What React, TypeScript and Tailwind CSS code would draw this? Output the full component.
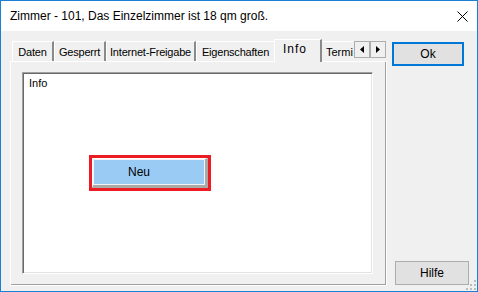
import React from "react";

const tabs = [
  { label: "Daten", w: "w-[42px]" },
  { label: "Gesperrt", w: "w-[52px]" },
  { label: "Internet-Freigabe", w: "w-[90px]" },
  { label: "Eigenschaften", w: "w-[80px]" },
];

function Tab({ label, w }: { label: string; w: string }) {
  return (
    <div
      className={`${w} h-[20px] shrink-0 border-t border-l border-white border-r-2 border-r-[#8a8a8a] pt-[2px] leading-[16px] text-center whitespace-nowrap tracking-[-0.2px]`}
    >
      {label}
    </div>
  );
}

function Arrow({ dir }: { dir: "left" | "right" }) {
  return (
    <div className="w-[16px] h-[17px] border border-[#adadad] bg-[#f0f0f0] flex items-center justify-center">
      <svg width="4" height="7" viewBox="0 0 4 7">
        {dir === "left" ? (
          <path d="M4 0 L0 3.5 L4 7 Z" fill="#000" />
        ) : (
          <path d="M0 0 L4 3.5 L0 7 Z" fill="#000" />
        )}
      </svg>
    </div>
  );
}

export default function App() {
  return (
    <div className="w-[478px] h-[292px] border border-[#1c7fd6] flex flex-col bg-[#f0f0f0] text-black text-[11px] font-['Liberation_Sans',Arial,sans-serif]">
      {/* title bar */}
      <div className="h-[30px] shrink-0 bg-white flex items-center justify-between pl-[9px] pr-[9px]">
        <span className="text-[12px]">
          Zimmer - 101, Das Einzelzimmer ist 18 qm groß.
        </span>
        <svg width="11" height="11" viewBox="0 0 11 11">
          <path d="M0.5 0.5 L10.5 10.5 M10.5 0.5 L0.5 10.5" stroke="#000" strokeWidth="1" />
        </svg>
      </div>

      <div className="relative flex-1 flex">
        {/* tab control */}
        <div className="ml-[9px] w-[377px] pt-[8px] pb-[5px] flex flex-col">
          <div className="h-[22px] shrink-0 flex items-end pl-[2px]">
            {tabs.map((t) => (
              <Tab key={t.label} label={t.label} w={t.w} />
            ))}
            <div className="relative z-10 -ml-[2px] -mr-[2px] -mb-px w-[48px] h-[23px] shrink-0 bg-[#f0f0f0] border-t border-l border-white border-r-2 border-r-[#8a8a8a] pt-[1px] pl-[8px] leading-[16px] text-[12px] tracking-[1px]">
              Info
            </div>
            <div className="w-[34px] h-[20px] shrink-0 border-t border-l border-white pt-[2px] pl-[5px] leading-[16px] whitespace-nowrap">
              Termi
            </div>
            <div className="self-start mt-[2px] flex">
              <Arrow dir="left" />
              <Arrow dir="right" />
            </div>
          </div>

          <div className="flex-1 border-t border-l border-white border-r border-b border-[#696969] border-t-white border-l-white shadow-[inset_-1px_-1px_0_#a0a0a0] pl-[11px] pt-[10px]">
            <div className="w-[351px] h-[202px] bg-white border border-t-[#a0a0a0] border-l-[#a0a0a0] border-r-white border-b-white shadow-[inset_1px_1px_0_#696969,inset_-1px_-1px_0_#e3e3e3] flex flex-col">
              <div className="pl-[6px] pt-[2px] leading-[16px]">Info</div>
              <div className="ml-[66px] mt-[64px] w-[122px] h-[36px] border-[3px] border-[#ed1c24] bg-[#f4f4f4]">
                <div className="w-full h-full border-t border-l border-white border-r-[3px] border-b-[3px] border-r-[#a9a9a9] border-b-[#a9a9a9] p-px">
                  <div className="w-full h-full bg-[#99cbf5] flex items-center pl-[34px] text-[12px]">
                    Neu
                  </div>
                </div>
              </div>
            </div>
          </div>
        </div>

        {/* buttons */}
        <div className="flex-1 flex flex-col">
          <button className="ml-[5px] mt-[11px] w-[72px] h-[24px] border-2 border-[#0078d7] bg-[#e1e1e1] text-[12px] leading-none">
            Ok
          </button>
          <button className="ml-[8px] mt-auto mb-[6px] w-[74px] h-[24px] border border-[#adadad] bg-[#e1e1e1] text-[12px] leading-none">
            Hilfe
          </button>
        </div>

        {/* size grip */}
        <svg className="absolute right-[1px] bottom-[1px]" width="10" height="10" viewBox="0 0 10 10">
          <rect x="8" y="0" width="2" height="2" fill="#bcbcbc" />
          <rect x="4" y="4" width="2" height="2" fill="#bcbcbc" />
          <rect x="8" y="4" width="2" height="2" fill="#bcbcbc" />
          <rect x="0" y="8" width="2" height="2" fill="#bcbcbc" />
          <rect x="4" y="8" width="2" height="2" fill="#bcbcbc" />
          <rect x="8" y="8" width="2" height="2" fill="#bcbcbc" />
        </svg>
      </div>
    </div>
  );
}
